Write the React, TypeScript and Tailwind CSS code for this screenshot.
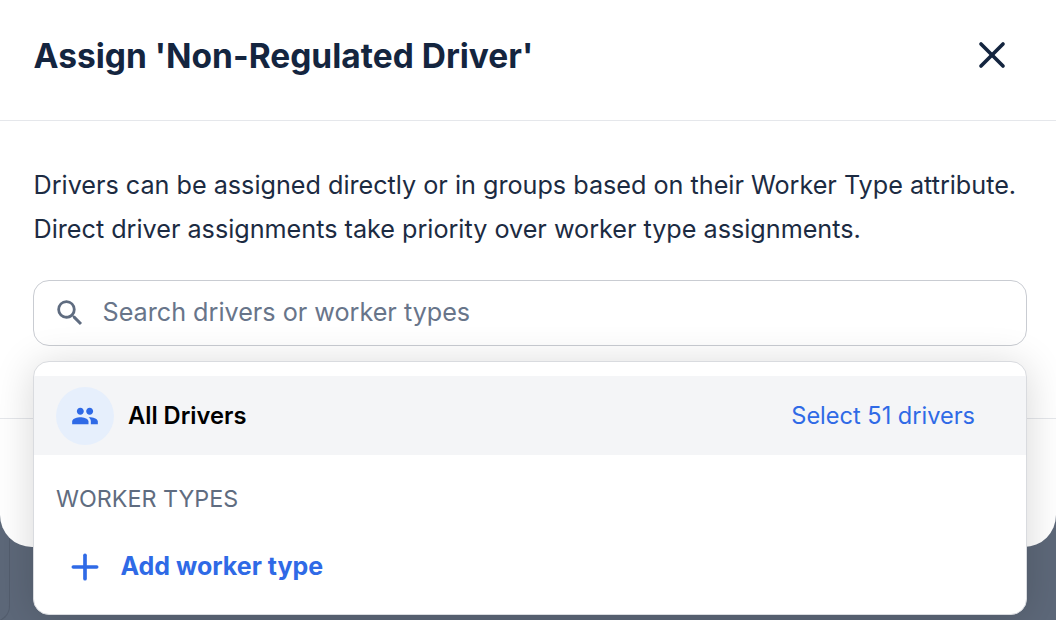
import { X, Plus } from "lucide-react";

function GroupIcon() {
  return (
    <svg width="28" height="28" viewBox="0 0 24 24" fill="#2f6ae6">
      <path d="M16 11c1.66 0 2.99-1.34 2.99-3S17.66 5 16 5s-3 1.34-3 3 1.34 3 3 3zm-8 0c1.66 0 2.99-1.34 2.99-3S9.66 5 8 5 5 6.34 5 8s1.34 3 3 3zm0 2c-2.33 0-7 1.17-7 3.5V19h14v-2.5c0-2.33-4.67-3.5-7-3.5zm8 0c-.29 0-.62.02-.97.05 1.16.84 1.97 1.97 1.97 3.45V19h6v-2.5c0-2.33-4.67-3.5-7-3.5z" />
    </svg>
  );
}

function SearchIcon() {
  return (
    <svg width="34" height="34" viewBox="0 0 24 24" fill="#5f6c80">
      <path d="M15.5 14h-.79l-.28-.27A6.47 6.47 0 0 0 16 9.5 6.5 6.5 0 1 0 9.5 16c1.61 0 3.09-.59 4.23-1.57l.27.28v.79l5 4.99L20.49 19l-4.99-5zm-6 0C7.01 14 5 11.99 5 9.5S7.01 5 9.5 5 14 7.01 14 9.5 11.99 14 9.5 14z" />
    </svg>
  );
}

export default function App() {
  return (
    <div className="relative h-[620px] w-[1056px] overflow-hidden bg-[#5d6879] font-['Inter',sans-serif]">
      {/* page behind the modal */}
      <div className="absolute bottom-[-2px] left-[-20px] h-[100px] w-[30px] rounded-br-2xl border-b border-r border-[#535d6d]" />

      {/* modal */}
      <div className="relative h-[547px] rounded-b-[32px] bg-white">
        <div className="flex h-[121px] items-center justify-between border-b border-[#e5e7eb] pl-[33.5px] pr-[42px]">
          <h1 className="pb-[7px] text-[33.5px] font-bold leading-none text-[#14253f]">Assign 'Non-Regulated Driver'</h1>
          <X size={44} strokeWidth={2} className="mb-[10px] text-[#14253f]" />
        </div>

        <div className="pl-[33px] pt-[42px]">
          <p className="ml-[0.5px] whitespace-nowrap text-[25.18px] leading-[44px] text-[#1c2b42]">
            Drivers can be assigned directly or in groups based on their Worker Type attribute.
            <br />
            Direct driver assignments take priority over worker type assignments.
          </p>
          <div className="mt-[29px] flex h-[66px] w-[994px] items-center rounded-[16px] border border-[#c9ccd2] bg-white pl-[19px]">
            <SearchIcon />
            <span className="ml-[15.5px] text-[25.18px] text-[#68758a]">Search drivers or worker types</span>
          </div>
        </div>

        <div className="mt-[72px] border-t border-[#e5e7eb]" />

        {/* dropdown */}
        <div className="absolute left-[33px] top-[361px] h-[254px] w-[994px] rounded-[16px] border border-[#d9dbdf] bg-white pt-[14px] shadow-[0_4px_40px_rgba(0,0,0,0.16)]">
          <div className="flex h-[79px] items-center justify-between bg-[#f4f5f7] pl-[22px] pr-[51px]">
            <div className="flex items-center gap-[14px]">
              <div className="flex h-[58px] w-[58px] items-center justify-center rounded-full bg-[#e6effc]">
                <GroupIcon />
              </div>
              <span className="text-[23.7px] font-semibold text-black">All Drivers</span>
            </div>
            <span className="text-[23.55px] text-[#2f6ae6]">Select 51 drivers</span>
          </div>
          <div className="pl-[22px] pt-[28px] text-[23.3px] leading-[32px] text-[#5f6c80]">WORKER TYPES</div>
          <div className="mt-[32px] flex h-[40px] items-center pl-[31px]">
            <Plus size={40} strokeWidth={2.2} className="text-[#2f6ae6]" />
            <span className="ml-[15.5px] text-[25px] font-bold text-[#2f6ae6]">Add worker type</span>
          </div>
        </div>
      </div>
    </div>
  );
}
